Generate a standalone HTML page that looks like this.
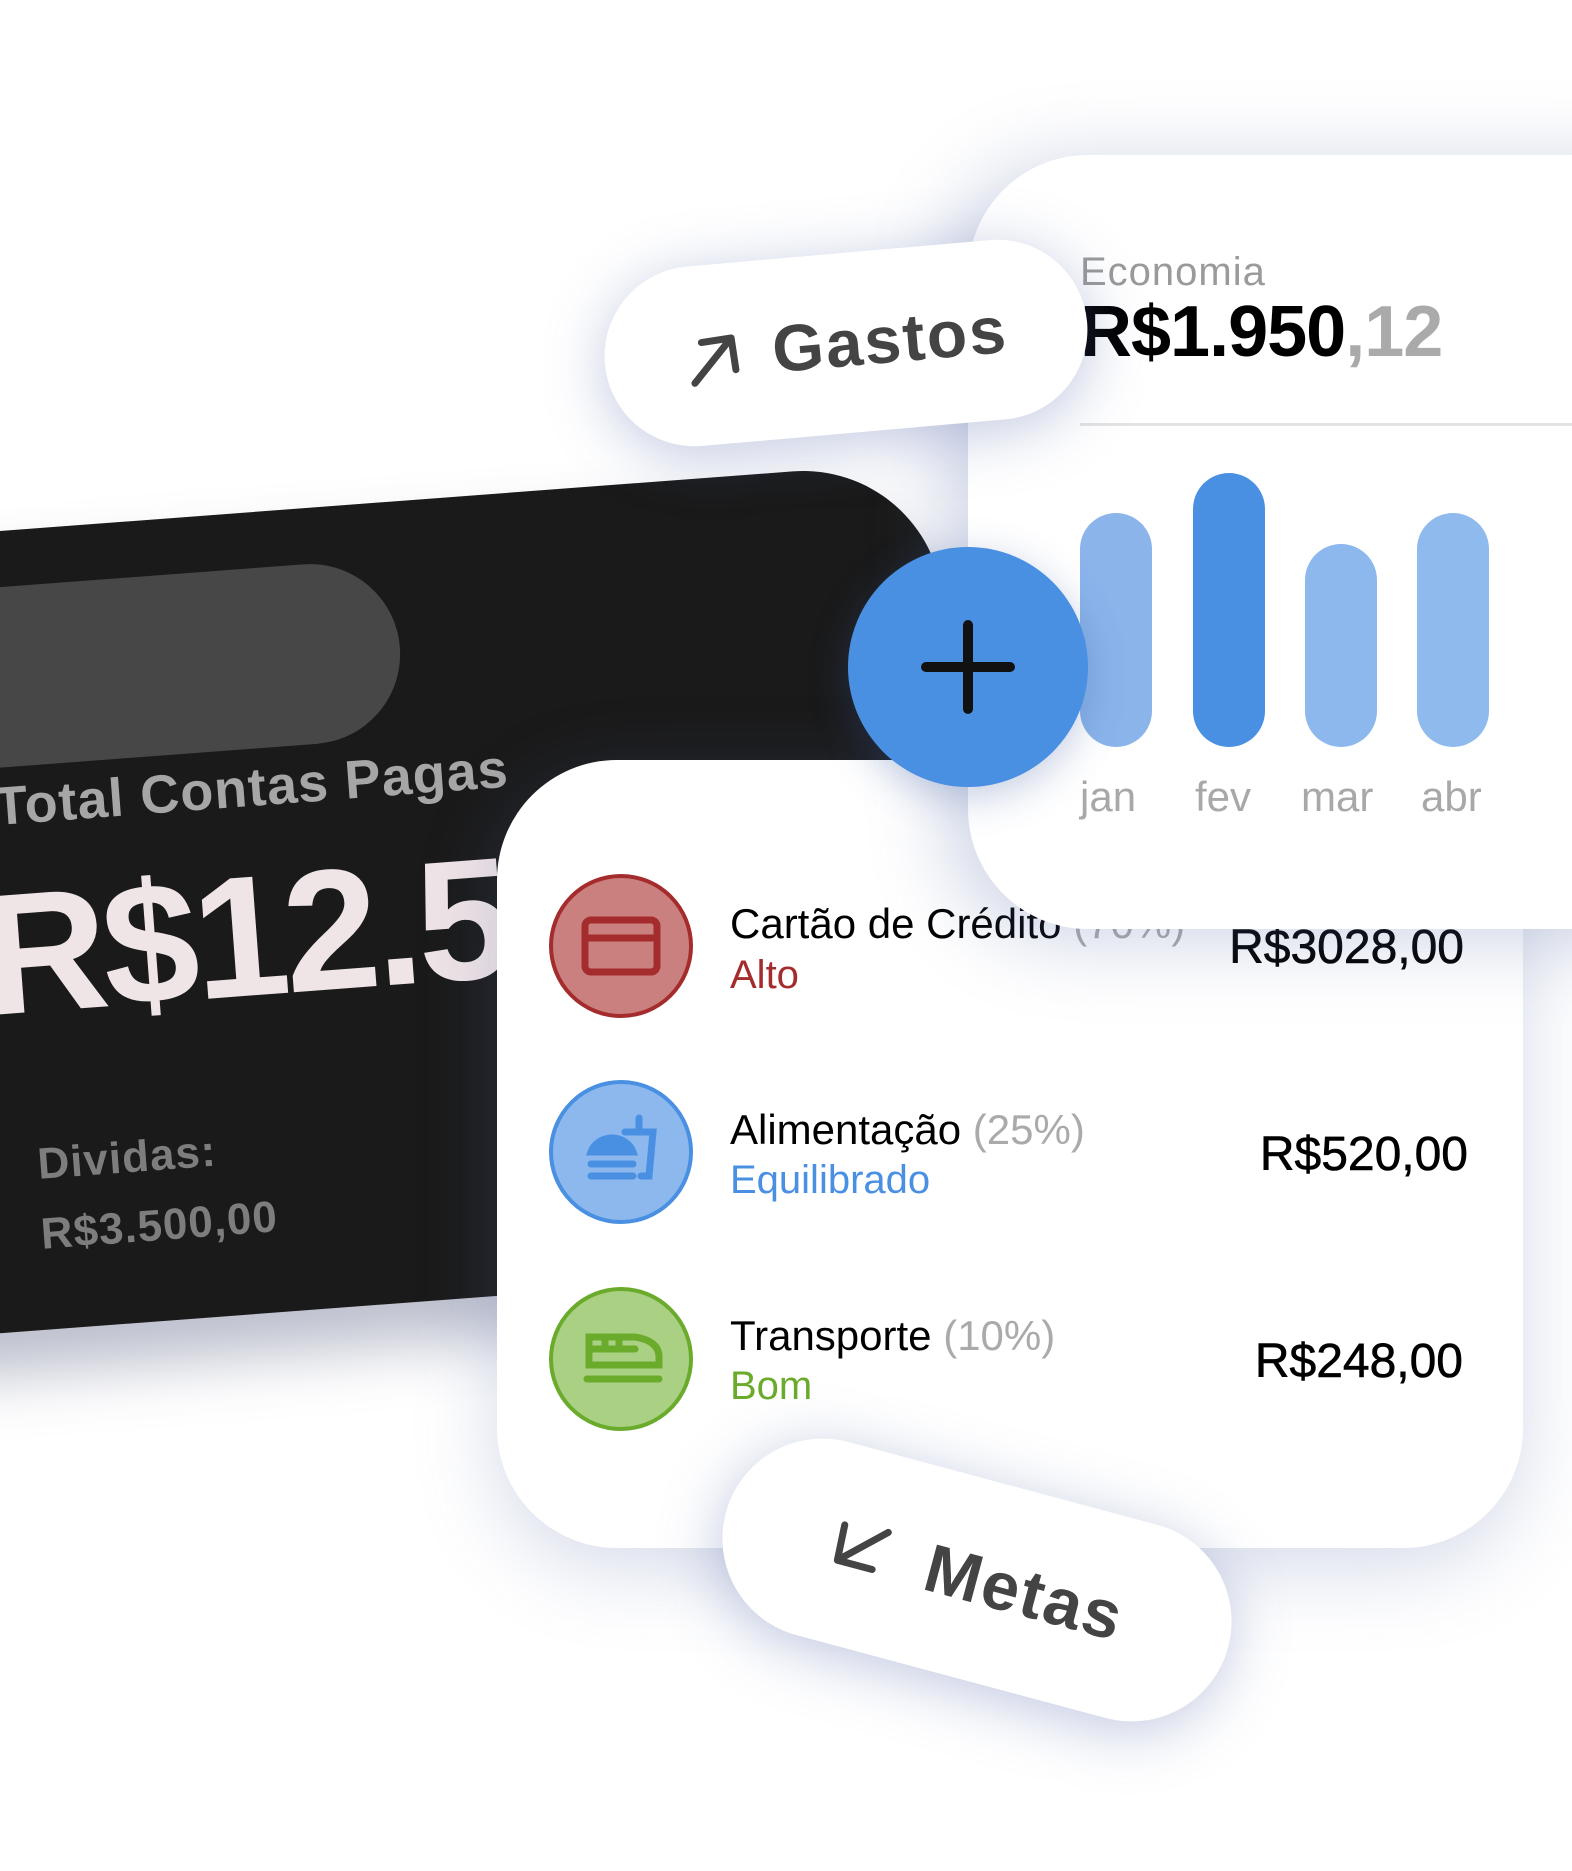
<!DOCTYPE html>
<html><head><meta charset="utf-8"><style>
*{margin:0;padding:0;box-sizing:border-box}
body{width:1572px;height:1871px;background:#fff;position:relative;overflow:hidden;font-family:"Liberation Sans",sans-serif}
.abs{position:absolute}
#dark{left:0;top:531px;width:0;height:0;transform:rotate(-4.3deg);transform-origin:0 0}
#dcard{position:absolute;left:-300px;top:0;width:1235px;height:800px;background:#1a1a1a;border-radius:0 140px 140px 0;box-shadow:0 40px 60px rgba(60,70,110,.35)}
#gpill{position:absolute;left:-300px;top:56px;width:690px;height:180px;background:#474747;border-radius:90px}
.dt{position:absolute;white-space:nowrap;font-weight:bold}
#list{left:497px;top:760px;width:1026px;height:788px;background:#fff;border-radius:120px;box-shadow:0 20px 80px rgba(90,110,170,.25)}
#eco{left:968px;top:155px;width:700px;height:774px;background:#fff;border-radius:120px 0 0 120px;box-shadow:-20px 10px 80px rgba(90,110,170,.3)}
.bar{position:absolute;width:72px;border-radius:36px}
.lab{position:absolute;font-size:42px;color:#a8a8a8}
#plus{left:848px;top:547px;width:240px;height:240px;border-radius:50%;background:#4a90e2;box-shadow:0 10px 40px rgba(60,90,160,.3)}
.pill{background:#fff;border-radius:100px;box-shadow:0 10px 60px rgba(80,100,170,.35);color:#444;font-weight:bold;display:flex;align-items:center;justify-content:center}
.ic{position:absolute;width:144px;height:144px;border-radius:50%;border:4px solid}
.t{position:absolute;font-size:42px;color:#000;white-space:nowrap}
.t .p{color:#aaa}
.s{position:absolute;font-size:40px;white-space:nowrap}
.amt{position:absolute;font-size:48px;color:#000;white-space:nowrap;text-align:right;width:400px;-webkit-text-stroke:0.6px #000}
</style></head><body>

<div id="dark" class="abs">
 <div id="dcard"></div>
 <div id="gpill"></div>
 <div class="dt" style="left:-26px;top:244px;font-size:54px;color:#a6a6a6;letter-spacing:1px">Total Contas Pagas</div>
 <div class="dt" style="left:-48px;top:324px;font-size:172px;color:#efe4e6;letter-spacing:-5px">R$12.500</div>
 <div class="dt" style="left:-10px;top:610px;font-size:44px;color:#7d7d7d;letter-spacing:1px">Dividas:</div>
 <div class="dt" style="left:-12px;top:680px;font-size:44px;color:#7d7d7d;letter-spacing:1px">R$3.500,00</div>
</div>

<div id="list" class="abs">
 <div class="ic" style="left:52px;top:114px;background:#cb8080;border-color:#a52c2c">
  <svg width="136" height="136" viewBox="0 0 136 136" style="position:absolute;left:0;top:0"><rect x="32" y="42" width="72" height="52" rx="6" fill="none" stroke="#a52c2c" stroke-width="7"/><line x1="32" y1="60" x2="104" y2="60" stroke="#a52c2c" stroke-width="7"/></svg>
 </div>
 <div class="t" style="left:233px;top:140px">Cartão de Crédito <span class="p">(70%)</span></div>
 <div class="s" style="left:233px;top:193px;color:#a52c2c">Alto</div>
 <div class="amt" style="left:567px;top:160px">R$3028,00</div>

 <div class="ic" style="left:52px;top:320px;background:#8db8ee;border-color:#4a90e2">
  <svg width="136" height="136" viewBox="0 0 136 136" style="position:absolute;left:0;top:0" fill="none" stroke="#4a90e2" stroke-width="7" stroke-linecap="round"><path d="M38 68 A22 20 0 0 1 80 68 Z" fill="#4a90e2"/><line x1="38" y1="80" x2="80" y2="80"/><line x1="38" y1="92" x2="80" y2="92"/><path d="M72 48 H100 L96 92 H88"/><line x1="86" y1="34" x2="86" y2="48"/></svg>
 </div>
 <div class="t" style="left:233px;top:346px">Alimentação <span class="p">(25%)</span></div>
 <div class="s" style="left:233px;top:398px;color:#4a90e2">Equilibrado</div>
 <div class="amt" style="left:571px;top:367px">R$520,00</div>

 <div class="ic" style="left:52px;top:527px;background:#a9d083;border-color:#6aab2c">
  <svg width="136" height="136" viewBox="0 0 136 136" style="position:absolute;left:0;top:0" fill="none" stroke="#6aab2c" stroke-width="7" stroke-linecap="round"><path d="M36 46 H82 Q106 50 106 66 V74 H36 Z"/><line x1="36" y1="58" x2="82" y2="58"/><line x1="52" y1="46" x2="52" y2="58"/><line x1="66" y1="46" x2="66" y2="58"/><line x1="34" y1="88" x2="106" y2="88"/></svg>
 </div>
 <div class="t" style="left:233px;top:552px">Transporte <span class="p">(10%)</span></div>
 <div class="s" style="left:233px;top:604px;color:#6aab2c">Bom</div>
 <div class="amt" style="left:566px;top:574px">R$248,00</div>
</div>

<div id="eco" class="abs">
 <div style="position:absolute;left:112px;top:95px;font-size:40px;color:#9a9a9a;letter-spacing:1px">Economia</div>
 <div style="position:absolute;left:112px;top:136px;font-size:72px;font-weight:bold;color:#000;letter-spacing:-1px;white-space:nowrap">R$1.950<span style="color:#aaa">,12</span></div>
 <div style="position:absolute;left:112px;top:268px;width:600px;height:3px;background:#e3e3e3"></div>
 <div class="bar" style="left:112px;top:358px;height:234px;background:#8ab4ea"></div>
 <div class="bar" style="left:225px;top:318px;height:274px;background:#4a90e2"></div>
 <div class="bar" style="left:337px;top:389px;height:203px;background:#8db8ee"></div>
 <div class="bar" style="left:449px;top:358px;height:234px;background:#8fbaee"></div>
 <div class="lab" style="left:112px;top:618px">jan</div>
 <div class="lab" style="left:227px;top:618px">fev</div>
 <div class="lab" style="left:333px;top:618px">mar</div>
 <div class="lab" style="left:453px;top:618px">abr</div>
</div>

<div id="plus" class="abs">
 <svg width="240" height="240" viewBox="0 0 240 240" style="position:absolute;left:0;top:0"><line x1="120" y1="78" x2="120" y2="162" stroke="#111" stroke-width="10" stroke-linecap="round"/><line x1="78" y1="120" x2="162" y2="120" stroke="#111" stroke-width="10" stroke-linecap="round"/></svg>
</div>

<div class="abs pill" style="left:604px;top:253px;width:484px;height:180px;transform:rotate(-5deg);font-size:66px;letter-spacing:2px">
 <svg width="60" height="60" viewBox="0 0 60 60" style="margin-right:28px;margin-top:10px" fill="none" stroke="#444" stroke-width="7" stroke-linecap="round" stroke-linejoin="round"><path d="M8 52 L48 10 M18 12 L48 10 L50 42"/></svg>Gastos
</div>

<div class="abs pill" style="left:717px;top:1480px;width:520px;height:200px;transform:rotate(15deg);font-size:68px;letter-spacing:2px">
 <svg width="60" height="60" viewBox="0 0 60 60" style="margin-right:38px;margin-top:-6px" fill="none" stroke="#444" stroke-width="7" stroke-linecap="round" stroke-linejoin="round"><path d="M52 10 L10 50 M8 14 L10 50 L46 50"/></svg>Metas
</div>
</body></html>
